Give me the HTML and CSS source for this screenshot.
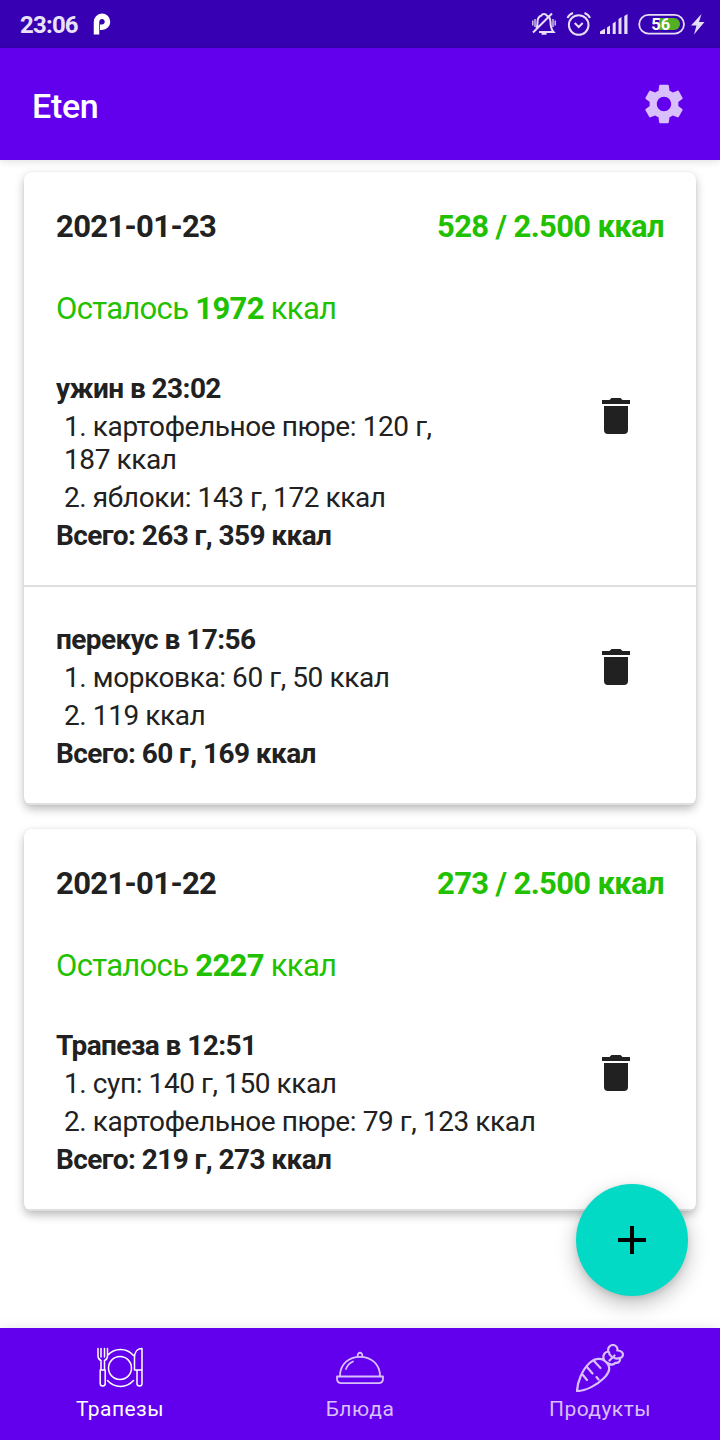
FILE: index.html
```html
<!DOCTYPE html>
<html lang="ru">
<head>
<meta charset="utf-8">
<title>Eten</title>
<link rel="stylesheet" href="styles.css">
</head>
<body>
<svg width="0" height="0" class="defs">
  <symbol id="trash" viewBox="0 0 28 36"><path d="M0 2h7.500L9.500 0h9L20.500 2H28v4H0zM2 8h24v24a4 4 0 0 1-4 4H6a4 4 0 0 1-4-4z"/></symbol>
</svg>
<div class="screen">
  <div class="status">
    <span class="clock">23:06</span>
    <svg class="p-logo" width="18" height="22" viewBox="0 0 18 22"><path d="M3.500 21.500V9a5.500 5.500 0 1 1 5.500 5.300H7" fill="none" stroke="#fff" stroke-width="5.500"/></svg>
    <svg class="status-icons" width="200" height="48" viewBox="0 0 200 48" fill="none" stroke="#e6def5" stroke-width="2">
      <path d="M16.500 28c1-2 1-4 1-6 0-4 1-5.500 4-6.500.5-2 4.500-2 5 0 3 1 4 3 4 6.500 0 5 .5 7 3 10H19M21.500 33.700h5M13 32.500L32 13.500"/>
      <path d="M15 19v8M12.800 20.500v5M33 19v8M35.200 20.500v5" stroke-width="1.300"/>
      <circle cx="58.700" cy="25" r="9.800"/><path d="M54.700 23l4 4 4-4M47.500 18c1-2.500 2.500-4 5.500-5M70 18c-1-2.500-2.500-4-5.500-5"/>
      <path fill="#e6def5" stroke="none" d="M80 31.500l5-3V34h-5zM87 27.500l3-2V34h-3zM92.700 23.500l3-2V34h-3zM98.500 19l3-2v17h-3zM104.300 16l3.200-2v20h-3.200z"/>
      <rect x="119.200" y="14.800" width="44.800" height="18.800" rx="9.400" stroke-width="1.800"/>
      <path d="M139 18h15a6 6 0 0 1 0 12h-15z" fill="#52b022" stroke="none"/>
      <text x="140.800" y="30" text-anchor="middle" class="battery">56</text>
      <path d="M181.500 14L171 25.500h5.500l-2.500 9L184.500 22H179z" fill="#e6def5" stroke="none"/>
    </svg>
  </div>
  <header class="appbar">
    <h1>Eten</h1>
    <svg width="48" height="48" viewBox="0 0 24 24" fill="#d9bffb"><path d="M19.140 12.940c.04-.3.060-.61.060-.94 0-.32-.02-.64-.07-.94l2.030-1.580c.18-.14.23-.41.120-.61l-1.920-3.320c-.12-.22-.37-.29-.59-.22l-2.390.96c-.5-.38-1.030-.7-1.620-.94l-.36-2.540c-.04-.24-.24-.41-.48-.41h-3.840c-.24 0-.43.17-.47.41l-.36 2.540c-.59.24-1.130.57-1.620.94l-2.390-.96c-.22-.08-.47 0-.59.220L2.740 8.870c-.12.21-.08.47.12.61l2.030 1.580c-.05.3-.09.63-.09.94s.02.64.07.94l-2.030 1.580c-.18.14-.23.41-.12.61l1.920 3.320c.12.22.37.29.59.220l2.390-.96c.5.38 1.030.7 1.620.94l.36 2.540c.05.24.24.41.48.41h3.840c.24 0 .44-.17.47-.41l.36-2.540c.59-.24 1.130-.56 1.620-.94l2.390.96c.22.08.47 0 .59-.22l1.920-3.320c.12-.22.070-.47-.12-.61l-2.010-1.580zM12 15.600c-1.980 0-3.600-1.620-3.600-3.600s1.620-3.600 3.600-3.600 3.600 1.620 3.600 3.600-1.620 3.600-3.600 3.600z"/></svg>
  </header>
  <main class="content">
    <section class="card">
      <div class="day"><span class="date">2021-01-23</span><span class="total">528 / 2.500 ккал</span></div>
      <p class="left">Осталось <b>1972</b> ккал</p>
      <div class="meal">
        <div class="info"><b>ужин в 23:02</b><p>1. картофельное пюре: 120 г, 187&nbsp;ккал</p><p>2. яблоки: 143 г, 172&nbsp;ккал</p><b>Всего: 263 г, 359 ккал</b></div>
        <svg class="trash"><use href="#trash"/></svg>
      </div>
      <div class="meal">
        <div class="info"><b>перекус в 17:56</b><p>1. морковка: 60 г, 50&nbsp;ккал</p><p>2. 119 ккал</p><b>Всего: 60 г, 169 ккал</b></div>
        <svg class="trash"><use href="#trash"/></svg>
      </div>
    </section>
    <section class="card">
      <div class="day"><span class="date">2021-01-22</span><span class="total">273 / 2.500 ккал</span></div>
      <p class="left">Осталось <b>2227</b> ккал</p>
      <div class="meal">
        <div class="info"><b>Трапеза в 12:51</b><p>1. суп: 140 г, 150&nbsp;ккал</p><p>2. картофельное пюре: 79 г, 123&nbsp;ккал</p><b>Всего: 219 г, 273 ккал</b></div>
        <svg class="trash"><use href="#trash"/></svg>
      </div>
    </section>
  </main>
  <button class="fab" aria-label="Добавить"><svg width="28" height="28"><path d="M12 0h4v12h12v4H16v12h-4V16H0v-4h12z"/></svg></button>
  <nav class="tabs">
    <a class="tab active">
      <svg width="48" height="48" viewBox="0 0 48 48" fill="none" stroke="currentColor" stroke-width="1.500" stroke-linecap="round" stroke-linejoin="round"><circle cx="24" cy="24" r="11.500"/><path d="M11.500 11.500a17.300 17.300 0 0 1 26 0M11.500 36.500a17.300 17.300 0 0 0 26 0M2 4.500V12c0 3 1.500 4 3 4.500V26h3.500v-9.500c1.500-.5 3-1.500 3-4.500V4.500M5 4.500V13M8.500 4.500V13M4.200 26h5v13.500a2.500 2.500 0 0 1-5 0zM46 4.500c-5 0-7.500 4-7.500 9V26H46zM41 26.500v13a2.500 2.500 0 0 0 5 0v-13"/></svg>
      <span>Трапезы</span>
    </a>
    <a class="tab">
      <svg width="48" height="48" viewBox="0 0 48 48" fill="none" stroke="currentColor" stroke-width="1.800" stroke-linecap="round" stroke-linejoin="round"><path d="M4 32C4 20 13 12.800 24 12.800S44 20 44 32M21.800 12.500c-1-5 5.400-5 4.400 0M10 25q2-5.500 7-7.500M1 32.500h46v2q0 4.700-4.500 4.700h-37q-4.500 0-4.500-4.700z"/></svg>
      <span>Блюда</span>
    </a>
    <a class="tab">
      <svg width="48" height="48" viewBox="0 0 48 48" fill="none" stroke="currentColor" stroke-width="2.200" stroke-linecap="round" stroke-linejoin="round"><path d="M1 47C1.500 38 6 26 13.500 19 20 13 27 14 31 19c4 4.500 2 10-3 15-7 7-18 13-27 13zM6.500 30.500l4.500 5.500M11 23l5.500 6.500M18 17l6.500 7M20.500 33l2 2.500M28.500 16.500c-2.500-4-.5-8.500 3.800-9-1-4 2-6.500 4.700-6.500s5 2.500 4.300 5.500c4 0 6.200 2.500 5.500 5.200-.6 1.500-1.800 2.300-3 2.300 1 3-1.300 5.300-4.300 4.800-2 2.500-5 2.200-8 .2M33 8c0 2 .7 3 2 4M37.500 13.500c1.500 1.200 4 1.200 6 .5M33.500 16.500l5-5"/></svg>
      <span>Продукты</span>
    </a>
  </nav>
</div>
</body>
</html>
```
FILE: styles.css
```css
* { box-sizing: border-box; margin: 0; }
body { font-family: Roboto, sans-serif; color: #212121; background: #fff; }
.defs { position: absolute; }
.screen { position: relative; width: 720px; height: 1440px; display: flex; flex-direction: column; overflow: hidden; }
.status { height: 48px; background: #3700b3; display: flex; align-items: center; padding-left: 20px; flex: none; }
.clock { color: #e9e2f7; font-size: 24px; font-weight: 700; line-height: 28px; padding-top: 2px; width: 73px; letter-spacing: -.8px; }
.status-icons { margin-left: auto; flex: none; }
.battery { fill: #fff; stroke: none; font-size: 16.500px; font-weight: 700; }
.appbar { height: 112px; flex: none; background: #6200ee; color: #fff; display: flex; align-items: center; justify-content: space-between; padding: 0 32px; box-shadow: 0 1px 8px rgba(0,0,0,.14); }
.appbar h1 { font-size: 34px; font-weight: 500; line-height: 40px; padding-top: 4px; letter-spacing: -.3px; }
.content { flex: 1; padding: 12px 24px; display: flex; flex-direction: column; gap: 24px; }
.card { border-radius: 8px; background: #fff; overflow: hidden; box-shadow: 0 4px 10px rgba(0,0,0,.27), 0 0 2px rgba(0,0,0,.07); }
.day { display: flex; justify-content: space-between; padding: 36px 32px 0; font-size: 31px; line-height: 38px; font-weight: 700; letter-spacing: -.65px; }
.total, .left { color: #1fc100; }
.total { letter-spacing: -.64px; }
.left { font-size: 31px; line-height: 38px; padding: 44px 32px 8px; letter-spacing: -.68px; }
.meal { display: flex; justify-content: space-between; padding: 36px 66px 33px 32px; border-bottom: 2px solid #dfdfdf; }
.info { width: 490px; display: flex; flex-direction: column; gap: 5px; font-size: 28px; line-height: 33px; letter-spacing: -.57px; }
.info p { padding-left: 8px; letter-spacing: -.41px; }
.trash { width: 28px; height: 36px; margin-top: 26px; fill: #212121; }
.fab { position: absolute; left: 576px; top: 1184px; width: 112px; height: 112px; border: 0; border-radius: 50%; background: #03dac5; display: grid; place-items: center; box-shadow: 0 8px 20px rgba(0,0,0,.25), 0 2px 6px rgba(0,0,0,.1); }
.tabs { height: 112px; flex: none; display: flex; background: #6200ee; box-shadow: 0 0 12px rgba(0,0,0,.1); }
.tab { flex: 1; display: flex; flex-direction: column; align-items: center; padding-top: 16px; color: #d9bffb; font-size: 21px; line-height: 26px; letter-spacing: .45px; }
.tab span { margin-top: 4px; }
.tab.active { color: #fff; }
```
